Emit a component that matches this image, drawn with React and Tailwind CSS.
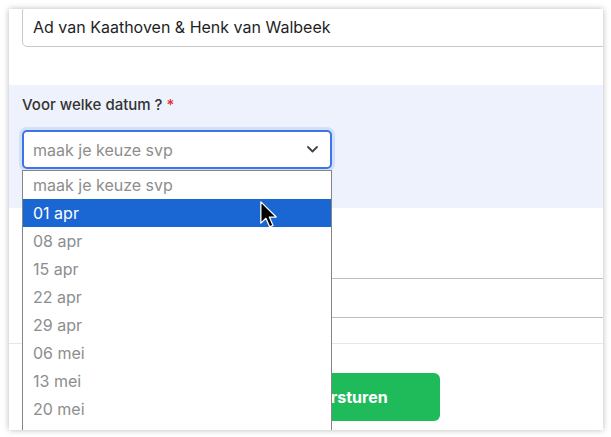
import { useState } from 'react'

const options = ['maak je keuze svp', '01 apr', '08 apr', '15 apr', '22 apr', '29 apr', '06 mei', '13 mei', '20 mei']

export default function App() {
  const [selected] = useState(1)

  return (
    <div className="w-[611px] h-[437px] bg-white pt-[9px] pl-[9px]" style={{ fontFamily: 'Inter, "Noto Sans", sans-serif' }}>
      <div className="relative w-[594px] h-[421px] overflow-hidden bg-white shadow-[0_0_6px_rgba(0,0,0,0.28)]">
        <div className="-mt-[3px] ml-[13px] w-[640px] h-[41px] border border-[#c9c9c9] rounded-[5px] flex items-center pl-[10px] text-[16px] text-[#1f1f1f]">
          Ad van Kaathoven &amp; Henk van Walbeek
        </div>

        <div className="mt-[38px] h-[123px] bg-[#eef2fc] pl-[13px] pt-[10px]">
          <label className="block text-[15px] leading-[20px] font-medium text-[#333]">
            Voor welke datum ? <span className="text-[#e03131]">*</span>
          </label>
          <div className="mt-[15px] w-[310px] h-[39px] border-2 border-[#3f74e6] rounded-[5px] bg-white ring-[3px] ring-[#d3e0fb] flex items-center justify-between pl-[9px] pr-[12px]">
            <span className="text-[16px] text-[#8d8d8d]">maak je keuze svp</span>
            <svg width="11" height="7" viewBox="0 0 11 7" fill="none">
              <path d="M1 1l4.5 4.5L10 1" stroke="#444" strokeWidth="1.8" strokeLinecap="round" strokeLinejoin="round" />
            </svg>
          </div>
        </div>

        <div className="mt-[70px] ml-[13px] w-[640px] h-[40px] border border-[#bdbdbd] rounded-[5px]" />

        <div className="mt-[25px] border-t border-[#e7e7e7]" />

        <button className="mt-[29px] ml-[249px] w-[182px] h-[48px] rounded-[6px] bg-[#1fbb5b] text-white text-[16px] font-bold">
          Versturen
        </button>

        <div className="absolute left-[13px] top-[161px] w-[310px] h-[270px] bg-white border border-[#858585]">
          {options.map((o, i) => (
            <div
              key={o}
              className={
                i === selected
                  ? 'h-[28px] flex items-center pl-[10px] text-[16px] bg-[#1a66d3] text-white'
                  : 'h-[28px] flex items-center pl-[10px] text-[16px] text-[#8d8d8d]'
              }
            >
              {o}
            </div>
          ))}
        </div>

        <svg className="absolute left-[251px] top-[192px]" width="17" height="27" viewBox="0 0 12 19">
          <path d="M0.6 0.6 L0.6 15.6 L4.2 12.2 L6.8 18.2 L9.2 17.2 L6.6 11.3 L11.4 11.3 Z" fill="#000" stroke="#fff" strokeWidth="0.9" strokeLinejoin="round" />
        </svg>
      </div>
    </div>
  )
}
